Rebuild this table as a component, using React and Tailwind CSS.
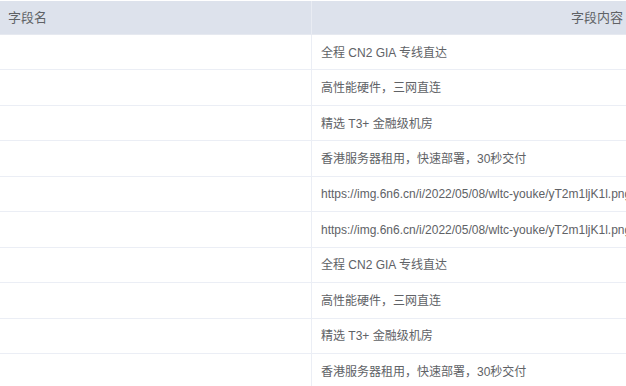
import React from 'react'

const rows = [
  '全程 CN2 GIA 专线直达',
  '高性能硬件，三网直连',
  '精选 T3+ 金融级机房',
  '香港服务器租用，快速部署，30秒交付',
  'https://img.6n6.cn/i/2022/05/08/wltc-youke/yT2m1ljK1l.png',
  'https://img.6n6.cn/i/2022/05/08/wltc-youke/yT2m1ljK1l.png',
  '全程 CN2 GIA 专线直达',
  '高性能硬件，三网直连',
  '精选 T3+ 金融级机房',
  '香港服务器租用，快速部署，30秒交付',
]

function App() {
  return (
    <div className="w-[626px] h-[386px] overflow-hidden bg-white pt-px font-['Liberation_Sans','Noto_Sans_CJK_SC',sans-serif] text-[#606266]">
      <div className="flex h-[34px] bg-[#dde2ec] border-b border-[#e6e9f0] text-[13px]">
        <div className="w-[312px] flex items-center pl-2 border-r border-[#e9ecf3]">字段名</div>
        <div className="flex-1 flex items-center justify-end pr-[3px]">字段内容</div>
      </div>
      {rows.map((text, i) => (
        <div key={i} className="flex h-[35.45px] border-b border-[#ebeef5] text-[12px]">
          <div className="w-[312px] shrink-0 border-r border-[#ebeef5]" />
          <div className="flex-1 min-w-0 flex items-center pl-[9px] pt-px whitespace-nowrap overflow-hidden">{text}</div>
        </div>
      ))}
    </div>
  )
}

export default App
